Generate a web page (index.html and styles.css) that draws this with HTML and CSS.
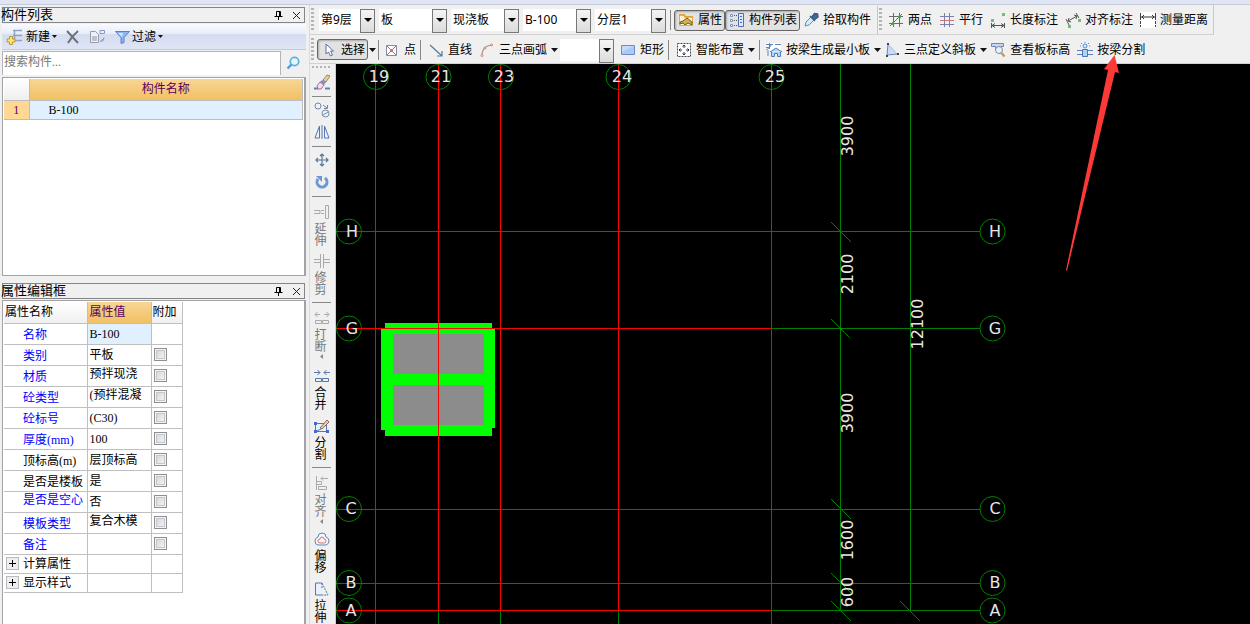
FILE: index.html
```
<!DOCTYPE html>
<html lang="zh-CN">
<head>
<meta charset="utf-8">
<title>构件列表</title>
<link rel="stylesheet" href="styles.css">
</head>
<body>
<svg class="defs" aria-hidden="true">
  <symbol id="pin" viewBox="0 0 9 10"><path d="M2.500 6V1.500h4V6M0.500 6.500h8M4.500 7v3M5.500 1v5" fill="none" stroke="#000"/></symbol>
  <symbol id="close" viewBox="0 0 9 9"><path d="M1 1l7 7M8 1L1 8" fill="none" stroke="#222"/></symbol>
  <symbol id="down" viewBox="0 0 7 4"><path d="M0 0h7L3.500 4z" fill="#111"/></symbol>
</svg>
<div class="app">
  <div class="topstrip"></div>
  <div class="main">
    <aside class="side">
      <section class="panel">
        <header class="title"><h2>构件列表</h2><button aria-label="固定"><svg width="9" height="10"><use href="#pin"/></svg></button><button aria-label="关闭"><svg width="9" height="9"><use href="#close"/></svg></button></header>
        <div class="listbar">
          <button><svg width="18" height="16" viewBox="0 0 18 16"><path d="M7 1.500h9M7 6.500h9M9 11.500h7M8.500 2v9" stroke="#8fa3c4" stroke-width="1.500" fill="none"/><path d="M3.500 7.500h3v2.500h2.500v3H6.500v2.500h-3V13H1v-3h2.500z" fill="#ffe276" stroke="#b99a37"/></svg>新建<svg width="5" height="3"><use href="#down"/></svg></button>
          <button aria-label="删除"><svg width="14" height="14" viewBox="0 0 14 14"><path d="M1 1l11 12M12 1Q6 6 2 13" stroke="#6f7177" stroke-width="2" fill="none"/></svg></button>
          <button aria-label="复制"><svg width="17" height="15" viewBox="0 0 17 15"><path d="M1.500 2.500h5l3 3v8h-8z" fill="#eef1f5" stroke="#99a"/><path d="M3 7h5v5H3z" fill="#b9c1cc"/><path d="M11 1.500h4.500v3H11zM12 12.500q3 0 3-4M14 10l-3 2.500" fill="none" stroke="#8a9bc4"/></svg></button>
          <button><svg width="15" height="14" viewBox="0 0 15 14"><path d="M.5 1.500h14l-5.500 6v5l-3 1v-6z" fill="#8fb6ee" stroke="#5a7fc9"/><path d="M3 3h5l-1 4z" fill="#d5e6fd"/></svg>过滤<svg width="5" height="3"><use href="#down"/></svg></button>
        </div>
        <div class="search"><input type="text" placeholder="搜索构件..." aria-label="搜索构件"><button aria-label="搜索"><svg width="14" height="14" viewBox="0 0 14 14"><circle cx="8.500" cy="5.500" r="4.200" fill="#e8f7ff" stroke="#5fb2e4" stroke-width="1.800"/><path d="M5.500 8.500L1.500 12.500" stroke="#4a9fd8" stroke-width="2.400"/></svg></button></div>
        <div class="box list">
          <table class="items"><thead><tr><th class="num"></th><th>构件名称</th></tr></thead><tbody><tr><td class="num">1</td><td>B-100</td></tr></tbody></table>
        </div>
      </section>
      <section class="panel grow">
        <header class="title"><h2>属性编辑框</h2><button aria-label="固定"><svg width="9" height="10"><use href="#pin"/></svg></button><button aria-label="关闭"><svg width="9" height="9"><use href="#close"/></svg></button></header>
        <div class="box props">
          <table class="grid">
            <colgroup><col class="c1"><col class="c2"><col class="c3"></colgroup>
            <thead><tr><th>属性名称</th><th class="hot">属性值</th><th>附加</th></tr></thead>
            <tbody>
              <tr><th>名称</th><td class="sel">B-100</td><td></td></tr>
              <tr><th>类别</th><td>平板</td><td><input type="checkbox" aria-label="附加 类别"></td></tr>
              <tr><th>材质</th><td class="up">预拌现浇</td><td><input type="checkbox" aria-label="附加 材质"></td></tr>
              <tr><th>砼类型</th><td class="up">(预拌混凝</td><td><input type="checkbox" aria-label="附加 砼类型"></td></tr>
              <tr><th>砼标号</th><td>(C30)</td><td><input type="checkbox" aria-label="附加 砼标号"></td></tr>
              <tr><th>厚度(mm)</th><td>100</td><td><input type="checkbox" aria-label="附加 厚度"></td></tr>
              <tr class="dark"><th>顶标高(m)</th><td>层顶标高</td><td><input type="checkbox" aria-label="附加 顶标高"></td></tr>
              <tr class="dark"><th>是否是楼板</th><td>是</td><td><input type="checkbox" aria-label="附加 是否是楼板"></td></tr>
              <tr><th class="up">是否是空心</th><td>否</td><td><input type="checkbox" aria-label="附加 是否是空心"></td></tr>
              <tr><th>模板类型</th><td class="up">复合木模</td><td><input type="checkbox" aria-label="附加 模板类型"></td></tr>
              <tr><th>备注</th><td></td><td><input type="checkbox" aria-label="附加 备注"></td></tr>
              <tr class="group"><th><button aria-label="展开 计算属性"><svg width="7" height="7" viewBox="0 0 7 7"><path d="M0 3.500h7M3.500 0v7" stroke="#000"/></svg></button>计算属性</th><td></td><td></td></tr>
              <tr class="group"><th><button aria-label="展开 显示样式"><svg width="7" height="7" viewBox="0 0 7 7"><path d="M0 3.500h7M3.500 0v7" stroke="#000"/></svg></button>显示样式</th><td></td><td></td></tr>
            </tbody>
          </table>
        </div>
      </section>
    </aside>
    <div class="work">
      <div class="bar first">
        <i class="grip"></i>
        <span class="combos">
          <span class="combo w56"><select aria-label="楼层"><option>第9层</option></select></span>
          <span class="combo w68"><select aria-label="构件类别"><option>板</option></select></span>
          <span class="combo w68"><select aria-label="构件类型"><option>现浇板</option></select></span>
          <span class="combo w68"><select aria-label="构件"><option>B-100</option></select></span>
          <span class="combo w71"><select aria-label="分层"><option>分层1</option></select></span>
        </span>
        <i class="sep"></i>
        <button class="tool pressed"><svg class="ic" viewBox="0 0 16 16"><path d="M1.500 2.500h5l1 2h7v9h-13z" fill="#fff3cf" stroke="#e3a94e"/><path d="M1 3h5l1 2h8" stroke="#e89b33" stroke-width="1.500" fill="none"/><path d="M2 10l3-1 4-3 5 4v3l-4-2-3 2-2-2-3 1z" fill="#d0b24a" stroke="#6a5a28"/></svg>属性</button>
        <button class="tool pressed"><svg class="ic" viewBox="0 0 16 16"><path d="M1.500 2.500h2v2h-2zM1.500 7.500h2v2h-2zM1.500 12.500h2v2h-2z" fill="#fff" stroke="#7a93c9"/><path d="M5 3.500h3M5 8.500h3M5 13.500h3" stroke="#555" stroke-dasharray="1 1"/><path d="M9.500 1.500h5v13h-5z" fill="#dbe7fb" stroke="#4d6fb5"/><path d="M11 4.500h2M11 7.500h2M11 10.500h2" stroke="#4d6fb5"/></svg>构件列表</button>
        <button class="tool pick"><svg class="ic" viewBox="0 0 16 16"><path d="M2 14l1-4 5-5 3 3-5 5z" fill="#d4ecff" stroke="#5a8fc4"/><path d="M7 4l5 5M8.500 5.500l3-4 3 .5.5 3-4 3z" fill="#49668f" stroke="#3d5c8c" stroke-width="1.500"/></svg>拾取构件</button>
        <i class="edge"></i><i class="grip"></i>
        <button class="tool"><svg class="ic" viewBox="0 0 16 16"><path d="M5.500 1v14M11.500 1v14M1 4.500h14M1 11.500h14" stroke="#666b78"/><path d="M2 14L14 2" stroke="#b95050"/><circle cx="5" cy="11.500" r="1.500" fill="#48a348"/><circle cx="11.500" cy="5" r="1.500" fill="#48a348"/></svg>两点</button>
        <button class="tool"><svg class="ic" viewBox="0 0 16 16"><path d="M5.500 1v14M10.500 1v14M1 4.500h14M1 12.500h14" stroke="#7b80a8"/><path d="M1 8.500h14" stroke="#c77"/></svg>平行</button>
        <button class="tool"><svg class="ic" viewBox="0 0 16 16"><path d="M1 7h3v3H1zM12 1h3v3h-3z" fill="#6cc274"/><path d="M1.500 11v5M14.500 11v5M2 13.500h12M5 11.500l-3 2 3 2M11 11.500l3 2-3 2" fill="none" stroke="#555"/></svg>长度标注</button>
        <button class="tool"><svg class="ic" viewBox="0 0 16 16"><path d="M1 7l3 6M11 1l3 5M3 9l9-5M4 6l-1 3 3 1M9 3l3 1-1 3" fill="none" stroke="#555"/><path d="M3 13h3v3H3zM13 7h3v3h-3z" fill="#6cc274"/></svg>对齐标注</button>
        <button class="tool"><svg class="ic" viewBox="0 0 16 16"><path d="M0 0h16v16H0z" fill="#fff"/><path d="M.5 1v14M15.500 1v14" stroke="#444" stroke-dasharray="7 1 3 1"/><path d="M1 5h14M4 3L2 5l2 2M12 3l2 2-2 2" fill="none" stroke="#333"/></svg>测量距离</button>
      </div>
      <div class="bar second">
        <i class="grip"></i>
        <button class="tool pressed choose"><svg class="ic" viewBox="0 0 16 16"><path d="M5 2v10l2.500-2 2 4 2-1-2-4h3z" fill="#fff" stroke="#5b7396"/></svg>选择</button>
        <svg class="dd" width="7" height="4"><use href="#down"/></svg>
        <i class="sep tight"></i>
        <button class="tool point"><svg class="ic" viewBox="0 0 16 16"><path d="M2.500 3.500h10v10h-10z" fill="#fff" stroke="#88a"/><path d="M3 4l9 9M12 4l-9 9" stroke="#6b7fc8"/><circle cx="7.500" cy="8.500" r="1.500" fill="#d76868"/></svg>点</button>
        <i class="sep"></i>
        <button class="tool"><svg class="ic" viewBox="0 0 16 16"><path d="M2 3l12 11M14 9v5H9" fill="none" stroke="#547a9c" stroke-width="1.200"/></svg>直线</button>
        <button class="tool"><svg class="ic" viewBox="0 0 16 16"><path d="M3 14Q3 3 14 3" fill="none" stroke="#999" stroke-width="1.200"/><g fill="#fff" stroke="#d98266"><circle cx="3" cy="13.500" r="1"/><circle cx="6" cy="6" r="1"/><circle cx="12.500" cy="3" r="1"/></g></svg>三点画弧<svg class="dd" width="7" height="4"><use href="#down"/></svg></button>
        <span class="combo w53"><select aria-label="画弧方式"><option></option></select></span>
        <button class="tool rect"><svg class="ic" viewBox="0 0 16 16"><path d="M1.500 3.500h13v9h-13z" fill="#a9c9f7" stroke="#6d8cc5"/><path d="M2 4h12L2 10z" fill="#c5dafa"/></svg>矩形</button>
        <i class="sep"></i>
        <button class="tool near"><svg class="ic" viewBox="0 0 16 16"><path d="M1.500 1.500h13v13h-13z" fill="#fff" stroke="#445" stroke-dasharray="2 1"/><path d="M8 3v3M8 10v3M3 8h3M10 8h3M6.500 4.500L8 3l1.500 1.500M6.500 11.500L8 13l1.500-1.500M4.500 6.500L3 8l1.500 1.500M11.500 6.500L13 8l-1.500 1.500" fill="none" stroke="#334"/></svg>智能布置<svg class="dd" width="7" height="4"><use href="#down"/></svg></button>
        <i class="sep"></i>
        <button class="tool minimal"><svg class="ic" viewBox="0 0 16 16"><path d="M0 1h15v8H0z" fill="#fff"/><path d="M0 2.500h7M3.500 1v6M0 8q4-2 5-5M9 2.500h6M0 5.500h3M2 8v6" stroke="#5b87bb" fill="none"/><path d="M4 10l6-4 6 4M5.500 9.500v5h3v-3h3v3h3v-5" fill="#b9d5f4" stroke="#4c7fb8"/></svg>按梁生成最小板<svg class="dd" width="7" height="4"><use href="#down"/></svg></button>
        <button class="tool third"><svg class="ic" viewBox="0 0 16 16"><path d="M4 2L13 12H3z" fill="#c6dcf9"/><path d="M4 2l9 10" stroke="#a9bddd"/><path d="M4 2L3 13l11-1" fill="none" stroke="#6c86b2"/><path d="M3 1h2v2H3zM2 13h2v2H2zM13 11h2v2h-2z" fill="#345"/></svg>三点定义斜板<svg class="dd" width="7" height="4"><use href="#down"/></svg></button>
        <button class="tool look"><svg class="ic" viewBox="0 0 16 16"><path d="M1.500 1.500h12v3h-3v7l-5-4v-3h-4z" fill="#c4d6f5" stroke="#7187bb"/><circle cx="9" cy="8" r="3.500" fill="#e5f3ff" stroke="#889"/><path d="M11.500 11l3 3.500" stroke="#d19548" stroke-width="2.200"/></svg>查看板标高</button>
        <button class="tool"><svg class="ic" viewBox="0 0 16 16"><path d="M0 8.500h16M0 12.500h16" stroke="#5b82bd"/><path d="M5.500 7.500h5v7h-5z" fill="#acd2f8" stroke="#4d77b6"/><circle cx="8" cy="4" r="2" fill="#d8eaff" stroke="#5e8fd0"/><path d="M8 0v1M4 1l1 1M12 1l-1 1M3 4h1M12 4h1" stroke="#5e8fd0"/></svg>按梁分割</button>
      </div>
      <div class="stage">
        <nav class="rail">
          <i class="hgrip"></i>
          <button aria-label="删除"><svg class="ic" viewBox="0 0 16 16"><path d="M0 14.500h4M11 14.500h5" stroke="#5d83ad" stroke-width="2"/><path d="M9 6l4-5 3 1-4 6z" fill="#efd37c" stroke="#888"/><path d="M8 6l4 2-2 3-4-3z" fill="#7e91c8"/><path d="M6 8l4 3-3 4H4L3 12z" fill="#f6dbea" stroke="#a66d91"/></svg></button>
          <i class="rule"></i>
          <button aria-label="复制"><svg class="ic" viewBox="0 0 16 16"><circle cx="4" cy="4" r="3" fill="#eef4fa" stroke="#7389a5"/><circle cx="11.500" cy="11.500" r="3.500" fill="#eef4fa" stroke="#7389a5"/><path d="M9 13l5-3M9 3l4 3M13.500 3v3.500H10" fill="none" stroke="#7389a5"/></svg></button>
          <button class="sp6" aria-label="镜像"><svg class="ic" viewBox="0 0 16 16"><path d="M5.500 2v12H1zM10.500 2v12H15z" fill="#edf4ff" stroke="#5576ae"/><path d="M8 1v14" stroke="#5576ae"/></svg></button>
          <i class="rule"></i>
          <button aria-label="移动"><svg class="ic" viewBox="0 0 16 16"><path d="M8 2v12M2 8h12M6 4l2-2 2 2M6 12l2 2 2-2M4 6L2 8l2 2M12 6l2 2-2 2" fill="none" stroke="#54799a" stroke-width="1.200"/></svg></button>
          <button class="sp6" aria-label="旋转"><svg class="ic" viewBox="0 0 16 16"><path d="M4 5a5 5 0 1 0 7-1" fill="none" stroke="#6d96d5" stroke-width="3"/><path d="M2 2h6v6z" fill="#6d96d5"/></svg></button>
          <i class="rule"></i>
          <button class="off low"><svg class="ic" viewBox="0 0 16 16"><path d="M11.500 1.500h3v13h-3zM0 6.500h6v3H0M7 6.500h3M7 9.500h3" fill="none" stroke="#aaa"/></svg><span>延伸</span></button>
          <button class="off sp6"><svg class="ic" viewBox="0 0 16 16"><path d="M6.500 1v14M9.500 1v14M0 6.500h6M0 9.500h6M10 6.500h6M10 9.500h6" stroke="#aaa"/></svg><span>修剪</span></button>
          <i class="rule"></i>
          <button class="off low"><svg class="ic" viewBox="0 0 16 16"><path d="M1 4.500h5M10 4.500h5M3.500 2L1 4.500 3.500 7M12.500 2L15 4.500 12.500 7M1.500 10.500h6v3h-6zM8.500 10.500h6v3h-6z" fill="none" stroke="#aaa"/></svg><span>打断</span><svg class="tri" width="3" height="5" viewBox="0 0 3 5"><path d="M3 0v5L0 2.500z" fill="#888"/></svg></button>
          <button class="sp9"><svg class="ic" viewBox="0 0 16 16"><path d="M0 4.500h6M10 4.500h6M3.500 2L6 4.500 3.500 7M12.500 2L10 4.500 12.500 7M1.500 10.500h6v3h-6zM8.500 10.500h6v3h-6z" fill="none" stroke="#5877aa"/></svg><span>合并</span></button>
          <button class="sp7"><svg class="ic" viewBox="0 0 16 16"><path d="M1.500 5.500h11v8h-11zM1 14l6-3" fill="#e7f2ff" stroke="#5075cb"/><path d="M0 4h3v3H0zM0 12h3v3H0zM12 12h3v3h-3z" fill="#456ac5"/><path d="M6 10l7-8 2 2-7 7z" fill="#efd0a6" stroke="#8b6958"/></svg><span>分割</span></button>
          <i class="rule"></i>
          <button class="off low"><svg class="ic" viewBox="0 0 16 16"><path d="M2.500 1v14M2.500 6.500h5v3h-5M4.500 11.500h8v3h-8zM7 3.500h7M9 1.500L7 3.500l2 2" fill="none" stroke="#aaa"/></svg><span>对齐</span><svg class="tri" width="3" height="5" viewBox="0 0 3 5"><path d="M3 0v5L0 2.500z" fill="#888"/></svg></button>
          <button class="sp7"><svg class="ic" viewBox="0 0 16 16"><path d="M4 6Q4 2 8 2t4 4q3 1 3 4t-3 4H4q-3 0-3-4 0-3 3-4z" fill="#f3f8ff" stroke="#6585ae"/><path d="M6 8q0-2 2-2t2 2q2 0 2 2t-2 2H6q-2 0-2-2t2-2z" fill="#fff0f0" stroke="#ce7777"/></svg><span>偏移</span></button>
          <button class="sp7"><svg class="ic" viewBox="0 0 16 16"><path d="M8 2H1.500v12H8" fill="#e9f2fc" stroke="#5279a8"/><path d="M8 2l6 12H8M8 2v6" fill="none" stroke="#5279a8" stroke-dasharray="2 1"/></svg><span>拉伸</span></button>
        </nav>
        <svg class="plan" width="914" height="560" viewBox="336 64 914 560" role="img" aria-label="平面图">
          <path d="M385 323h107v6h3v99h-3v8H385v-6h-4V329h4z" fill="#0f0"/>
          <path d="M393 334h91v40h-91zM393 385h91v40h-91z" fill="#8c8c8c"/>
          <g class="green">
            <path d="M375.500 610v14M438.500 610v14M500.500 610v14M618.500 610v14M771.500 610v14M840.500 64v546M910.500 64v546M771 231.500h209M771 328.500h209M771 509.500h209M771 583.500h209M771 610.500h209"/>
            <path d="M831 222l20 20M831 319l19 19M831 499l20 20M831 573l20 20M831 601l20 20M900 601l20 20"/>
          </g>
          <path class="red" d="M375.500 64v546M438.500 64v546M500.500 64v546M618.500 64v546M771.500 64v546M336 231.500h435M336 328.500h435M336 509.500h435M336 583.500h435M336 610.500h435"/>
          <g class="green">
            <circle cx="376" cy="77" r="12.500"/><circle cx="438.500" cy="77" r="12.500"/><circle cx="501" cy="77" r="12.500"/><circle cx="618.500" cy="77" r="12.500"/><circle cx="771.500" cy="77" r="12.500"/>
            <circle cx="349" cy="231.500" r="12.500"/><circle cx="349" cy="328.500" r="12.500"/><circle cx="349" cy="509" r="12.500"/><circle cx="349" cy="583" r="12.500"/><circle cx="349" cy="610.500" r="12.500"/>
            <circle cx="992.500" cy="231.500" r="12.500"/><circle cx="992.500" cy="328.500" r="12.500"/><circle cx="992.500" cy="509" r="12.500"/><circle cx="992.500" cy="583" r="12.500"/><circle cx="992.500" cy="610.500" r="12.500"/>
          </g>
          <g class="mark">
            <text x="379" y="82">19</text><text x="441" y="82">21</text><text x="504" y="82">23</text><text x="622" y="82">24</text><text x="775" y="82">25</text>
            <text x="352" y="237">H</text><text x="352" y="334">G</text><text x="351" y="514">C</text><text x="351" y="588">B</text><text x="351" y="616">A</text>
            <text x="995" y="237">H</text><text x="995" y="334">G</text><text x="995" y="514">C</text><text x="995" y="588">B</text><text x="995" y="616">A</text>
            <text transform="translate(853 136) rotate(-90)">3900</text><text transform="translate(853 274) rotate(-90)">2100</text><text transform="translate(853 413) rotate(-90)">3900</text><text transform="translate(853 540) rotate(-90)">1600</text><text transform="translate(853 592) rotate(-90)">600</text><text transform="translate(923 324) rotate(-90)">12100</text>
          </g>
          <path d="M1114.500 55L1119 73l-4-1L1067 271l-1-1L1108 70l-4-1z" fill="#fb3a38"/>
        </svg>
      </div>
    </div>
  </div>
</div>
</body>
</html>
```
FILE: styles.css
```
* { box-sizing: border-box; }
html, body { height: 100%; margin: 0; }
body { overflow: hidden; background: #f0f0f0; color: #000; font: 12px/14px "Noto Sans", "Noto Sans CJK SC", sans-serif; }
button { display: flex; align-items: center; border: 0; padding: 0; background: none; font: inherit; color: inherit; flex: none; white-space: nowrap; }
svg { display: block; flex: none; }
.defs { position: absolute; width: 0; height: 0; }
.app { display: flex; flex-direction: column; height: 100%; }
.topstrip { height: 5px; flex: none; background: #dfe5f5; border-bottom: 1px solid #c5cad8; }
.main { display: flex; flex: 1; min-height: 0; }

/* Left docked panels */
.side { width: 306px; flex: none; display: flex; flex-direction: column; gap: 7px; padding-top: 2px; }
.panel { display: flex; flex-direction: column; flex: none; }
.grow { flex: 1; min-height: 0; }
.title { display: flex; align-items: center; gap: 9px; height: 16px; margin: 0 1px 1px 2px; padding-right: 3px; border: 1px solid #858585; }
.title h2 { flex: 1; margin: 0 0 2px -2px; font: 13px/14px "Noto Sans CJK SC", sans-serif; }
.listbar { display: flex; align-items: center; height: 26px; gap: 9px; padding-left: 4px; margin-left: 2px; background: linear-gradient(#f9fafe, #e8edf8 38%, #d5dcf0 40%, #dee5f6); border-bottom: 1px solid #c6cad4; }
.listbar button { gap: 2px; }
.search { display: flex; height: 24px; margin: 1px 1px 2px 2px; }
.search input { flex: 1; min-width: 0; border: 1px solid #b4b4bc; border-width: 1px 1px 0 1px; padding: 0 1px 4px; background: #fff; font: 12px/16px "Liberation Serif", "Noto Sans CJK SC", serif; }
.search input::placeholder { color: #777; opacity: 1; }
.search button { padding: 0 5px; }
.box { background: #fff; border: 1px solid #a2a2a8; border-width: 1px 2px 1px 1px; margin-left: 2px; padding: 1px; font: 12px/14px "Liberation Serif", "Noto Sans CJK SC", serif; }
.list { height: 199px; }
.props { flex: 1; border-bottom: 0; }
table { border-collapse: collapse; table-layout: fixed; }
th { font-weight: normal; }
.items { width: 100%; }
.items th, .items td { border: 1px solid #bdbdbd; border-width: 0 1px 1px 0; padding: 0; }
.items thead th { height: 21px; color: #5b005b; background: linear-gradient(#f8d594, #f0c064); }
.items thead .num { width: 25px; background: linear-gradient(#fff, #eee); }
.items td { height: 19px; padding-left: 19px; background: #e0f0ff; }
.items td.num { padding: 0; text-align: center; color: #5b005b; background: #ffd893; }
.grid { width: 178px; }
.c1 { width: 83px; } .c2 { width: 64px; } .c3 { width: 31px; }
.grid th, .grid td { height: 21px; padding: 0 0 0 2px; text-align: left; white-space: nowrap; overflow: hidden; border: 1px solid #bfbfbf; border-width: 0 1px 1px 0; }
.grid thead th { background: linear-gradient(#fff, #f0f0f0); padding-left: 1px; }
.grid thead th.hot { color: #5b005b; background: linear-gradient(#f8d594, #f0c064); padding-left: 2px; }
.grid tbody th { color: #00f; padding: 2px 0 0 19px; }
.grid tbody .dark th { color: #000; }
.grid tbody .up { padding-top: 0; padding-bottom: 3px; }
.grid .sel { background: #e0f0ff; }
.grid tbody .group th { color: #000; height: 19px; padding: 0 0 0 2px; }
.grid .group td { height: 19px; }
.group button { display: inline-flex; justify-content: center; width: 13px; height: 13px; margin-right: 4px; border: 1px solid #bbb; background: #eceef0; vertical-align: top; }
.grid input { display: block; appearance: none; width: 13px; height: 13px; margin: 0; border: 1px solid #8e8f8f; box-shadow: inset 0 0 0 1px #f4f4f4, inset 0 0 0 2px #c3c7cc; background: linear-gradient(135deg, #cdd1d8, #fafafa); }

/* Toolbars */
.work { flex: 1; min-width: 0; display: flex; flex-direction: column; padding-left: 3px; }
.bar { display: flex; align-items: center; height: 29px; flex: none; border-bottom: 1px solid #d2d2d2; border-left: 1px solid #dadada; }
.bar.first { height: 30px; align-self: flex-start; border-right: 1px solid #c8c8c8; padding: 1px 5px 0 0; }
.bar.second { padding-top: 1px; }
.grip { width: 3px; height: 24px; margin: 0 4px 0 1px; flex: none; background: repeating-linear-gradient(#b4b4b4 0 2px, #f0f0f0 2px 4px); }
.combos { display: flex; gap: 4px; margin-left: 1px; }
.combo { position: relative; height: 22px; flex: none; background: #fff; }
.combo select { display: block; width: 100%; height: 22px; padding: 0 14px 0 2px; border: 0; appearance: none; background: none; color: #000; font: inherit; }
.combo::before { content: ""; position: absolute; right: 0; top: 0; width: 13px; height: 22px; border: 1px solid #777; background: linear-gradient(#f4f4f4, #dcdcdc); pointer-events: none; }
.combo::after { content: ""; position: absolute; right: 3px; top: 9px; border: solid transparent; border-width: 4px 4px 0; border-top-color: #000; pointer-events: none; }
.w53 { width: 54px; } .w56 { width: 56px; } .w68 { width: 68px; } .w71 { width: 71px; }
.sep { width: 1px; height: 20px; margin: 0 0 0 4px; background: #888; flex: none; }
.sep.tight { margin-left: 2px; }
.edge { width: 1px; height: 28px; margin-left: 6px; background: #c8c8c8; flex: none; }
.ic { width: 16px; height: 16px; }
.tool { gap: 4px; margin-left: 7px; }
.grip + .tool { margin-left: 2px; }
.tool.pressed { height: 21px; padding: 0 2px 0 3px; border: 1px solid #666; border-radius: 3px; background: #e2e2e2; box-shadow: inset 1px 1px 2px #aaa; }
.first .sep + .pressed { margin-left: 3px; }
.pressed + .pressed { margin-left: 0; }
.tool.pick { margin-left: 3px; }
.bar .choose { margin-left: -1px; }
.choose + .dd { margin-left: 1px; }
.tool.point { margin-left: 5px; }
.bar .sep + .near { margin-left: 7px; }
.rect, .minimal { margin-left: 6px; }
.bar > .combo { margin-left: 2px; }
.third, .look { margin-left: 3px; }

/* Drawing area */
.stage { flex: 1; min-height: 0; display: flex; background: #000; }
.rail { width: 27px; flex: none; display: flex; flex-direction: column; align-items: center; background: #f0f0f0; border-left: 1px solid #ddd; border-right: 1px solid #ccc; padding: 2px 2px 0 0; }
.rail > * { flex: none; }
.hgrip { width: 20px; height: 2px; margin-bottom: 6px; background: repeating-linear-gradient(90deg, #b4b4b4 0 2px, #f0f0f0 2px 4px); }
.rail button { flex-direction: column; gap: 3px; }
.rail span { width: 14px; white-space: normal; line-height: 12px; word-break: break-all; text-align: left; }
.rail .tri { margin-top: -2px; }
.rail .off { color: #777; }
.rule { width: 19px; height: 1px; margin: 6px 0 5px; background: #888; }
.low { margin-top: 2px; }
.sp6 { margin-top: 6px; } .sp7 { margin-top: 7px; } .sp9 { margin-top: 9px; }
/* The callout arrow reaches up over the toolbar */
.plan { position: relative; overflow: visible; }
.green { fill: none; stroke: #008000; }
.red { fill: none; stroke: #f00; }
.mark { fill: #e6e6e6; font: 16px "DejaVu Sans", sans-serif; text-anchor: middle; }
```
